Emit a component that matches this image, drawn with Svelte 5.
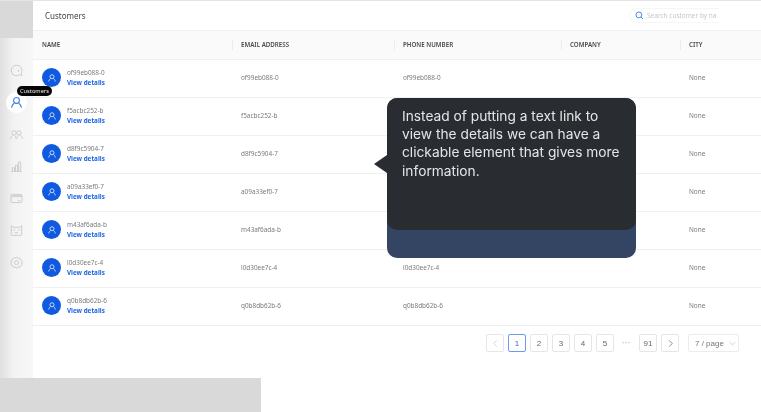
<script>
  const customers = [
    'of99eb088-0',
    'f5acbc252-b',
    'd8f9c5904-7',
    'a09a33ef0-7',
    'm43af6ada-b',
    'l0d30ee7c-4',
    'q0b8db62b-6'
  ];
  const columns = ['Name', 'Email address', 'Phone number', 'Company', 'City'];
  const pages = ['1', '2', '3', '4', '5'];
</script>

<div class="screen">
  <div class="left">
    <div class="patch"></div>
    <nav class="sidebar">
      <svg class="nav-icon" viewBox="0 0 16 16"><path d="M8 1.500a6.500 6.500 0 1 0 3.800 11.800l2.700.7-.6-2.700A6.500 6.500 0 0 0 8 1.500z" /><circle cx="10.500" cy="8.500" r=".6" /></svg>
      <div class="nav-active">
        <svg viewBox="0 0 16 16"><circle cx="8" cy="5.500" r="3.600" /><path d="M2 14.500c.4-3 2-5 3.400-5.600M14 14.500c-.4-3-2-5-3.400-5.600" /></svg>
        <span class="hint">Customers</span>
      </div>
      <svg class="nav-icon" viewBox="0 0 16 16"><circle cx="5" cy="6" r="2.700" /><circle cx="11" cy="6" r="2.700" /><path d="M.8 13.500c.2-2.400 1.400-4 2.600-4.600M7.600 13.500c-.2-2.200-1-3.800-2-4.500M8.400 13.500c.2-2.200 1-3.800 2-4.500M15.200 13.500c-.2-2.400-1.400-4-2.600-4.600" /></svg>
      <svg class="nav-icon" viewBox="0 0 16 16"><path d="M1.500 14h13M3 14V9.500h2.600V14M6.800 14V6.200h2.600V14M10.600 14V2.500h2.600V14" /></svg>
      <svg class="nav-icon" viewBox="0 0 16 16"><rect x="1.200" y="3" width="13.600" height="10" rx="1.400" /><path class="fill" d="M1.200 4.400c0-.8.6-1.400 1.400-1.400h10.800c.8 0 1.400.6 1.400 1.400V6.600H1.200z" /><path d="M10 10.600h2.800" /></svg>
      <svg class="nav-icon" viewBox="0 0 16 16"><path d="M1.600 2l3 2.100h6.800l3-2.100v11a1 1 0 0 1-1 1H2.600a1 1 0 0 1-1-1z" /><path d="M4 7.400h2.400M9.600 7.400H12M6 10.800h4" /></svg>
      <svg class="nav-icon" viewBox="0 0 16 16"><path d="M8 1.400l1.900 1.300 2.300-.1.900 2.100 1.900 1.300-.6 2.200.6 2.200-1.900 1.300-.9 2-2.300-.1L8 15l-1.900-1.400-2.300.1-.9-2-1.900-1.300.6-2.200-.6-2.200 1.900-1.300.9-2.100 2.300.1z" /><circle cx="8" cy="8.200" r="2.500" /></svg>
    </nav>
  </div>

  <main class="content">
    <header class="topbar">
      <h1>Customers</h1>
      <div class="search">
        <svg viewBox="0 0 12 12"><circle cx="5.200" cy="5.200" r="3.900" /><path d="M8 8l2.600 2.600" /></svg>
        <span>Search customer by na</span>
      </div>
    </header>

    <div class="row head">
      {#each columns as col}
        <div class="cell">{col}</div>
      {/each}
    </div>

    {#each customers as id}
      <div class="row">
        <div class="cell name">
          <span class="avatar">
            <svg viewBox="0 0 16 16"><circle cx="8" cy="6" r="3.200" /><path d="M2.800 13.500c.3-2.200 1.400-3.800 2.800-4.500M13.200 13.500c-.3-2.200-1.400-3.800-2.800-4.500" /></svg>
          </span>
          <div class="who">
            <span>{id}</span>
            <a href="#details">View details</a>
          </div>
        </div>
        <div class="cell">{id}</div>
        <div class="cell">{id}</div>
        <div class="cell"></div>
        <div class="cell">None</div>
      </div>
    {/each}

    <div class="pager">
      <button class="page muted" aria-label="Previous">
        <svg viewBox="0 0 10 10"><path d="M6.500 1.500L3 5l3.500 3.500" /></svg>
      </button>
      {#each pages as p, i}
        <button class="page" class:current={i === 0}>{p}</button>
      {/each}
      <span class="dots">•••</span>
      <button class="page">91</button>
      <button class="page" aria-label="Next">
        <svg viewBox="0 0 10 10"><path d="M3.500 1.500L7 5 3.500 8.500" /></svg>
      </button>
      <button class="size">
        7 / page
        <svg viewBox="0 0 10 10"><path d="M1 3l4 4 4-4" /></svg>
      </button>
    </div>
  </main>

  <div class="bottom-patch"></div>

  <aside class="note">
    <div class="note-body">
      Instead of putting a text link to view the details we can have a clickable element that gives more information.
    </div>
  </aside>
</div>

<style>
  :global(body) {
    margin: 0;
    background: #fff;
  }

  .screen {
    position: relative;
    display: flex;
    width: 761px;
    height: 412px;
    overflow: hidden;
    background: #fff;
    border-top: 1px solid #e4e4e4;
    box-sizing: border-box;
    font-family: "Noto Sans", sans-serif;
    color: #5f5f5f;
    filter: blur(.25px);
  }

  .left {
    width: 33px;
    flex: none;
    display: flex;
    flex-direction: column;
  }

  .patch {
    height: 37px;
    flex: none;
    background: #d9d9d9;
  }

  .sidebar {
    flex: 1;
    display: flex;
    flex-direction: column;
    align-items: center;
    padding-top: 26px;
    gap: 19px;
    background: linear-gradient(90deg, #e0e0e0 0, #f3f3f3 14px, #f7f7f7 100%);
  }

  .nav-icon {
    width: 13px;
    height: 13px;
    flex: none;
    fill: none;
    stroke: #c6c8cb;
    stroke-width: 1.1;
  }

  .nav-icon .fill {
    fill: #d3d5d7;
    stroke: none;
  }

  .nav-icon circle[r=".6"] {
    fill: #c6c8cb;
  }

  .nav-active {
    position: relative;
    width: 21px;
    height: 21px;
    flex: none;
    margin: -4px 0;
    border-radius: 50%;
    background: #fff;
    display: flex;
    align-items: center;
    justify-content: center;
  }

  .nav-active svg {
    width: 13px;
    height: 13px;
    fill: none;
    stroke: #3f7be8;
    stroke-width: 1.3;
  }

  .hint {
    position: absolute;
    left: 11px;
    top: -6px;
    height: 10px;
    line-height: 10px;
    padding: 0 3px;
    border-radius: 5px;
    background: #050505;
    color: #eee;
    font-size: 5.700px;
    white-space: nowrap;
  }

  .content {
    flex: 1;
    min-width: 0;
    display: flex;
    flex-direction: column;
  }

  .topbar {
    height: 29px;
    flex: none;
    display: flex;
    align-items: center;
    justify-content: space-between;
    padding-left: 12px;
  }

  h1 {
    margin: 0;
    font-size: 8px;
    font-weight: 400;
    color: #444;
  }

  .search {
    width: 90px;
    height: 15px;
    margin-right: 42px;
    padding-left: 5px;
    box-sizing: border-box;
    display: flex;
    align-items: center;
    gap: 3px;
    overflow: hidden;
    border: 1px solid #f6f6f6;
    border-right: 0;
    border-radius: 8px 0 0 8px;
    font-size: 6.500px;
    color: #c4c7ca;
    white-space: nowrap;
  }

  .search svg {
    width: 9px;
    height: 9px;
    flex: none;
    fill: none;
    stroke: #3f7be8;
    stroke-width: 1.2;
  }

  .row {
    display: grid;
    grid-template-columns: 199px 162px 167px 119px 81px;
    height: 38px;
    flex: none;
    box-sizing: border-box;
    padding-bottom: 2px;
    border-bottom: 1px solid #f0f0f0;
    font-size: 6.400px;
    color: #7b7b7b;
  }

  .cell {
    display: flex;
    align-items: center;
    padding-left: 9px;
  }

  .head {
    height: 30px;
    background: #fafafa;
    border-top: 1px solid #f1f3f3;
    border-bottom: 1px solid #f0f0f0;
    font-size: 6.200px;
    font-weight: 600;
    text-transform: uppercase;
    color: #4a4a4a;
  }

  .head .cell + .cell {
    position: relative;
  }

  .head .cell + .cell::before {
    content: "";
    position: absolute;
    left: 0;
    top: 9px;
    height: 10px;
    width: 1px;
    background: #ececec;
  }

  .name {
    gap: 6px;
  }

  .avatar {
    width: 19px;
    height: 19px;
    flex: none;
    border-radius: 50%;
    background: #0f5ae0;
    display: flex;
    align-items: center;
    justify-content: center;
  }

  .avatar svg {
    width: 10px;
    height: 10px;
    fill: none;
    stroke: #e8eefc;
    stroke-width: 1.300;
  }

  .who {
    display: flex;
    flex-direction: column;
    gap: 1px;
    line-height: 9px;
  }

  a {
    color: #1c64e4;
    font-weight: 700;
    font-size: 6.300px;
    text-decoration: none;
  }

  .pager {
    display: flex;
    align-items: center;
    justify-content: flex-end;
    gap: 4px;
    padding: 8px 22px 0 0;
  }

  .page {
    width: 18px;
    height: 18px;
    padding: 0;
    box-sizing: border-box;
    border: 1px solid #e6e6e6;
    border-radius: 2px;
    background: #fff;
    display: flex;
    align-items: center;
    justify-content: center;
    font-family: "Liberation Sans", sans-serif;
    font-size: 8px;
    color: #666;
  }

  .page svg {
    width: 9px;
    height: 9px;
    fill: none;
    stroke: #666;
    stroke-width: .8;
  }

  .page.muted svg {
    stroke: #c8c8c8;
  }

  .current {
    border-color: #6b9cf0;
    color: #2a6ae6;
  }

  .dots {
    width: 17px;
    text-align: center;
    font-size: 5px;
    letter-spacing: 1px;
    color: #b5b5b5;
  }

  .size {
    width: 51px;
    height: 18px;
    margin-left: 5px;
    padding: 0 0 0 6px;
    box-sizing: border-box;
    border: 1px solid #ececec;
    border-radius: 2px;
    background: #fff;
    display: flex;
    align-items: center;
    gap: 5px;
    font-family: "Liberation Sans", sans-serif;
    font-size: 8px;
    color: #777;
    white-space: nowrap;
  }

  .size svg {
    width: 7px;
    height: 7px;
    fill: none;
    stroke: #bbb;
    stroke-width: .9;
  }

  .bottom-patch {
    position: absolute;
    left: 0;
    bottom: 0;
    width: 261px;
    height: 34px;
    background: #d9d9d9;
  }

  .note {
    position: absolute;
    left: 387px;
    top: 97px;
    width: 249px;
    height: 160px;
    border-radius: 10px;
    background: #344563;
  }

  .note::before {
    content: "";
    position: absolute;
    left: -13px;
    top: 57px;
    border: 9px solid transparent;
    border-left: 0;
    border-right: 13px solid #292d32;
  }

  .note-body {
    height: 132px;
    box-sizing: border-box;
    padding: 9px 15px;
    border-radius: 10px;
    background: #292d32;
    color: #e4e5e6;
    font-family: "Inter", sans-serif;
    font-size: 13.750px;
    line-height: 18.200px;
  }
</style>
